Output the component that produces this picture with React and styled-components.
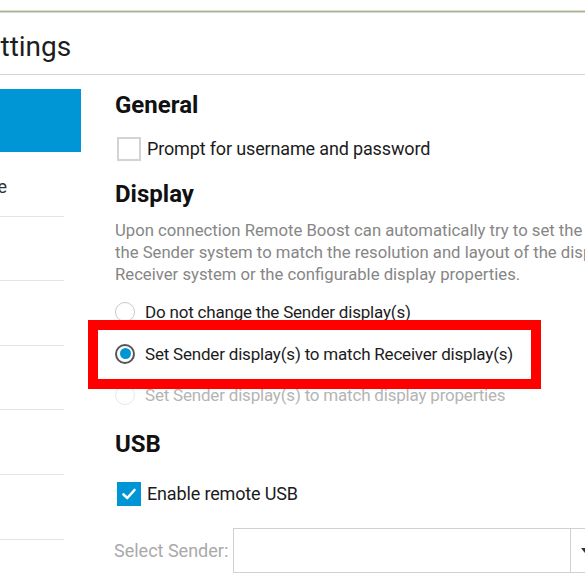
import React from "react";
import styled, { createGlobalStyle } from "styled-components";

const GlobalStyle = createGlobalStyle`
  html, body { margin: 0; padding: 0; background: #ffffff; }
  body { font-family: Roboto, "Liberation Sans", sans-serif; color: #1c1c1c; overflow: hidden; }
  * { box-sizing: border-box; }
`;

const Page = styled.div`
  position: relative;
  width: 585px;
  height: 585px;
  overflow: hidden;
  padding-top: 10px;
  background: #ffffff;
`;

const TopRule = styled.div`
  height: 3px;
  border-top: 1px solid #d6e0c8;
  border-bottom: 1px solid #d8d8d8;
  background: #a6b592;
`;

const Window = styled.div`
  margin-left: -121px;
  width: 760px;
  display: flex;
  flex-direction: column;
`;

const TitleBar = styled.div`
  height: 62px;
  padding: 20px 0 0 90px;
  border-bottom: 1px solid #d4d4d4;
  font-size: 28px;
  line-height: 28px;
  color: #1e1e1e;
`;

const Body = styled.div`
  display: flex;
  align-items: flex-start;
`;

const Sidebar = styled.nav`
  width: 202px;
  flex-shrink: 0;
  padding-top: 14px;
  display: flex;
  flex-direction: column;
`;

const NavItem = styled.div`
  height: ${(p) => (p.$active ? "63px" : "64.6px")};
  margin-right: ${(p) => (p.$active ? "0" : "17px")};
  padding: 5px 0 0 24px;
  display: flex;
  align-items: center;
  font-size: 18px;
  background: ${(p) => (p.$active ? "#0096d6" : "transparent")};
  color: ${(p) => (p.$active ? "#ffffff" : "#333333")};
  border-bottom: ${(p) => (p.$active ? "none" : "1px solid #e4e4e4")};
  white-space: nowrap;
`;

const Content = styled.main`
  margin-left: 34px;
  padding-top: 16px;
  display: flex;
  flex-direction: column;
  align-items: flex-start;
`;

const SectionTitle = styled.h2`
  margin: ${(p) => p.$mt || 0}px 0 0 0;
  font-size: 24px;
  line-height: 28px;
  font-weight: 700;
  color: #111111;
`;

const CheckRow = styled.label`
  margin-top: ${(p) => p.$mt}px;
  height: 24px;
  display: flex;
  align-items: center;
  gap: 6px;
  font-size: 18px;
  line-height: 24px;
  letter-spacing: -0.15px;
  color: #1c1c1c;
  white-space: nowrap;
`;

const Box = styled.span`
  width: 24px;
  height: 24px;
  margin-left: 2px;
  display: flex;
  align-items: center;
  justify-content: center;
  background: ${(p) => (p.$checked ? "#0096d6" : "#ffffff")};
  border: ${(p) => (p.$checked ? "none" : "2px solid #d3d3d3")};
`;

const Description = styled.p`
  margin: 12.4px 0 0 0;
  font-size: 16.7px;
  line-height: 22px;
  color: #868686;
  white-space: nowrap;
`;

const RadioGroup = styled.div`
  margin-top: 14px;
  display: flex;
  flex-direction: column;
  gap: 17.5px;
`;

const RadioRow = styled.label`
  height: 24px;
  display: flex;
  align-items: center;
  gap: 10px;
  font-size: 17px;
  line-height: 24px;
  letter-spacing: -0.2px;
  color: ${(p) => (p.$disabled ? "#b4b4b4" : "#1c1c1c")};
  white-space: nowrap;
`;

const RadioCircle = styled.span`
  width: 20px;
  height: 20px;
  border-radius: 50%;
  display: flex;
  align-items: center;
  justify-content: center;
  border: ${(p) =>
    p.$checked ? "2px solid #555555" : p.$disabled ? "1.5px solid #e6e6e6" : "1.5px solid #c9c9c9"};
  background: #ffffff;
  &::after {
    content: "";
    display: ${(p) => (p.$checked ? "block" : "none")};
    width: 11px;
    height: 11px;
    border-radius: 50%;
    background: #0096d6;
  }
`;

const SelectRow = styled.div`
  margin-top: 22px;
  display: flex;
  align-items: center;
  gap: 5px;
`;

const SelectLabel = styled.span`
  font-size: 18px;
  line-height: 24px;
  color: #a9a9a9;
  white-space: nowrap;
  margin-left: -1px;
`;

const SelectBox = styled.div`
  width: 367px;
  height: 45px;
  border: 1px solid #d0d0d0;
  display: flex;
  background: #ffffff;
`;

const SelectField = styled.div`
  flex: 1;
`;

const SelectButton = styled.div`
  width: 29px;
  border-left: 1px solid #d0d0d0;
  display: flex;
  align-items: center;
  justify-content: center;
  padding-top: 1px;
`;

const Highlight = styled.div`
  position: absolute;
  left: 88px;
  top: 320px;
  width: 453px;
  height: 69px;
  border: 10px solid #ff0000;
  pointer-events: none;
`;

const Check = () => (
  <svg width="18" height="18" viewBox="0 0 18 18">
    <path d="M3.5 9.5 L7.3 13 L14.5 5" fill="none" stroke="#ffffff" strokeWidth="2.6" strokeLinecap="round" strokeLinejoin="round" />
  </svg>
);

const Caret = () => (
  <svg width="8" height="6" viewBox="0 0 8 6">
    <path d="M0 0 H8 L4 5 Z" fill="#333333" />
  </svg>
);

const navItems = ["General", "Performance", "Display", "USB", "Audio", "Hotkeys", "Advanced"];

export default function App() {
  return (
    <>
      <GlobalStyle />
      <Page>
        <TopRule />
        <Window>
          <TitleBar>Settings</TitleBar>
          <Body>
            <Sidebar>
              {navItems.map((n, i) => (
                <NavItem key={n} $active={i === 0}>
                  {n}
                </NavItem>
              ))}
            </Sidebar>
            <Content>
              <SectionTitle>General</SectionTitle>
              <CheckRow $mt={18}>
                <Box />
                Prompt for username and password
              </CheckRow>
              <SectionTitle $mt={19}>Display</SectionTitle>
              <Description>
                Upon connection Remote Boost can automatically try to set the display(s) of
                <br />
                the Sender system to match the resolution and layout of the display(s) of the
                <br />
                Receiver system or the configurable display properties.
              </Description>
              <RadioGroup>
                <RadioRow>
                  <RadioCircle />
                  Do not change the Sender display(s)
                </RadioRow>
                <RadioRow>
                  <RadioCircle $checked />
                  Set Sender display(s) to match Receiver display(s)
                </RadioRow>
                <RadioRow $disabled>
                  <RadioCircle $disabled />
                  Set Sender display(s) to match display properties
                </RadioRow>
              </RadioGroup>
              <SectionTitle $mt={23}>USB</SectionTitle>
              <CheckRow $mt={24}>
                <Box $checked>
                  <Check />
                </Box>
                Enable remote USB
              </CheckRow>
              <SelectRow>
                <SelectLabel>Select Sender:</SelectLabel>
                <SelectBox>
                  <SelectField />
                  <SelectButton>
                    <Caret />
                  </SelectButton>
                </SelectBox>
              </SelectRow>
            </Content>
          </Body>
        </Window>
        <Highlight />
      </Page>
    </>
  );
}
